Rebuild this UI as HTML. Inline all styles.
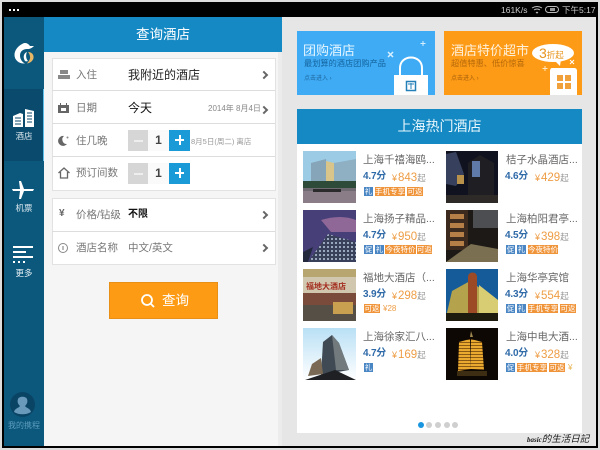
<!DOCTYPE html>
<html><head><meta charset="utf-8">
<style>
*{margin:0;padding:0;box-sizing:border-box}
html,body{width:600px;height:450px;overflow:hidden;background:#000}
body{position:relative;font-family:"Liberation Sans","Noto Sans CJK SC",sans-serif}
.a{position:absolute;white-space:nowrap}
.svg{position:absolute;overflow:visible}
.lbl{color:#777;font-size:10.5px;line-height:16px}
.sep{position:absolute;left:52px;width:223px;height:1px;background:#ddd}
.chev{position:absolute;width:6px;height:6px;border-top:2px solid #666;border-right:2px solid #666;transform:rotate(45deg)}
.t{font-size:10.5px;color:#666;line-height:14px}
.s{font-size:10px;color:#2f6aa8;font-weight:bold;line-height:12px;letter-spacing:-.2px}
.p{font-size:11.5px;color:#ee9d45;line-height:14px}
.p small{font-size:9px;margin-right:1px}
.p i{font-style:normal;font-size:8.5px;color:#999}
.tag{position:absolute;height:9px;line-height:9px;font-size:7.5px;color:#fff;text-align:center;background:#f0943a;white-space:nowrap;overflow:hidden}
.tag.b{background:#4a86c4}
.dot{position:absolute;top:422px;width:6px;height:6px;border-radius:50%;background:#cfcfcf}
</style></head><body>
<div class="a" style="left:0;top:0;width:600px;height:2px;background:#ddd"></div>
<div class="a" style="left:0;top:0;width:2px;height:450px;background:#ddd"></div>
<div class="a" style="left:598px;top:0;width:2px;height:450px;background:#ddd"></div>
<div class="a" style="left:0;top:448px;width:600px;height:2px;background:#ddd"></div>
<div class="a" style="left:9px;top:9px;width:2px;height:2px;background:#fff;box-shadow:4px 0 #fff,8px 0 #fff"></div>
<div class="a" style="left:501px;top:4px;font-size:8.5px;line-height:12px;color:#ccc">161K/s</div>
<svg class="svg" style="left:531px;top:5px" width="30" height="10" fill="none" stroke="#bbb"><path d="M1 3q5-3 10 0M3 5q3-2 6 0M5 7l1 1 1-1"/><rect x="14.500" y="1.500" width="13" height="6" rx="3"/><rect x="19" y="3" width="5" height="3" fill="#999" stroke="none"/></svg>
<div class="a" style="left:562px;top:4px;font-size:8.500px;line-height:12px;color:#ccc">下午5:17</div>

<div class="a" style="left:4px;top:17px;width:40px;height:429px;background:#0c587d"></div>
<div class="a" style="left:4px;top:89px;width:40px;height:72px;background:#0a4a6c"></div>
<div class="a" style="left:43px;top:89px;width:1px;height:72px;background:#5cc1ea"></div>
<svg class="svg" style="left:14px;top:41px" width="21" height="23"><path d="M20 5L16 5C14 2 11 1.500 9 2.500C4 5 .5 9 .5 14C.5 19 5 23 11 22.500C8 21 6 18 6 14.500C6 10.500 9 8 13 8C15 8 17 8 20 5z" fill="#fff"/><path d="M14 11C18 11 20 14 19.500 17C19 20 16 22 13 22.500C15 20 16.500 18 16 15.500C15.800 13.500 15 12 14 11z" fill="#e8b766"/><path d="M11 20C8.500 16 10 12 13 11C11.500 14 12 18 14 20C13 20.500 12 20.500 11 20z" fill="#fff"/></svg>
<svg class="svg" style="left:12px;top:108px" width="24" height="20" fill="#fff"><path d="M1 8l7-3 3 1v13H1zM13 1l9 2v16h-9z"/><path d="M3 10h6M3 13h6M3 16h6M15 5h5M15 8h5M15 11h5M15 14h5" stroke="#0a4a6c"/></svg>
<div class="a" style="left:4px;top:130px;width:40px;text-align:center;font-size:8.500px;line-height:12px;color:#dbe8ef">酒店</div>
<svg class="svg" style="left:11px;top:180px" width="24" height="20" fill="#fff"><path d="M1 9h22l-1 2H13l-3 8H8l1-8H2zM8 1h2l3 8H9z"/></svg>
<div class="a" style="left:4px;top:202px;width:40px;text-align:center;font-size:8.500px;line-height:12px;color:#dbe8ef">机票</div>
<svg class="svg" style="left:13px;top:246px" width="21" height="18" fill="#fff"><rect width="20" height="2" y="0"/><rect width="13" height="2" y="5"/><rect width="20" height="2" y="10"/><rect width="2" height="2" y="15"/><rect x="5" width="2" height="2" y="15"/><rect x="10" width="2" height="2" y="15"/></svg>
<div class="a" style="left:4px;top:267px;width:40px;text-align:center;font-size:8.500px;line-height:12px;color:#e8f0f4">更多</div>
<svg class="svg" style="left:10px;top:392px" width="25" height="25"><circle cx="12.500" cy="12.500" r="12.500" fill="#0a4465"/><path d="M4 20c1-4 5-4 6-6-2-2-3-4-2-7 1-3 8-3 9 0 1 3 0 5-2 7 1 2 5 2 6 6-5 3-12 3-17 0z" fill="#6a9abb"/></svg>
<div class="a" style="left:4px;top:420px;width:40px;text-align:center;font-size:8px;line-height:12px;color:#5d9cbd">我的携程</div>

<div class="a" style="left:44px;top:17px;width:238px;height:429px;background:#f5f5f5"></div>
<div class="a" style="left:278px;top:52px;width:4px;height:394px;background:#ececec"></div>
<div class="a" style="left:44px;top:17px;width:238px;height:35px;background:#1489c4;color:#fff;font-size:13.500px;line-height:35px;text-align:center">查询酒店</div>
<div class="a" style="left:52px;top:58px;width:224px;height:133px;background:#fff;border:1px solid #e2e2e2"></div>
<div class="a" style="left:52px;top:198px;width:224px;height:67px;background:#fff;border:1px solid #e2e2e2"></div>
<div class="sep" style="top:90px"></div><div class="sep" style="top:123px"></div><div class="sep" style="top:156px"></div><div class="sep" style="top:231px"></div>

<svg class="svg" style="left:58px;top:70px" width="12" height="10" fill="#888"><path d="M2 0h8v4H2zM0 5h12v4H0z"/></svg>
<div class="a lbl" style="left:76px;top:67px">入住</div>
<div class="a" style="left:128px;top:66px;font-size:12px;line-height:18px;color:#222">我附近的酒店</div>
<div class="chev" style="left:261px;top:72px"></div>
<svg class="svg" style="left:58px;top:103px" width="11" height="10" fill="#666"><path d="M0 2h2V0h1v2h5V0h1v2h2v8H0z"/><rect x="3" y="5" width="5" height="3" fill="#fff"/></svg>
<div class="a lbl" style="left:76px;top:100px">日期</div>
<div class="a" style="left:128px;top:99px;font-size:12px;line-height:18px;color:#111">今天</div>
<div class="a" style="left:208px;top:103px;font-size:8px;line-height:12px;color:#888">2014年 8月4日</div>
<div class="chev" style="left:261px;top:107px"></div>
<svg class="svg" style="left:58px;top:135px" width="11" height="11"><path d="M6 1a5 5 0 1 0 3 8a4.500 4.500 0 0 1-3-8z" fill="#666"/><circle cx="9.500" cy="2.500" r="1" fill="#888"/></svg>
<div class="a lbl" style="left:76px;top:133px">住几晚</div>
<svg class="svg" style="left:58px;top:167px" width="12" height="12" fill="none" stroke="#666" stroke-width="1.300"><path d="M0.500 6L6 1l5.500 5M2.500 5v6h7V5"/></svg>
<div class="a lbl" style="left:76px;top:165px">预订间数</div>

<div class="a" style="left:128px;top:130px;width:62px;height:21px;background:#fafafa"></div>
<div class="a" style="left:128px;top:130px;width:20px;height:21px;background:#d6d6d6"></div>
<div class="a" style="left:134px;top:140px;width:9px;height:2px;background:#eee"></div>
<div class="a" style="left:148px;top:130px;width:21px;height:21px;text-align:center;font-size:12px;font-weight:bold;line-height:21px;color:#444">1</div>
<div class="a" style="left:169px;top:130px;width:21px;height:21px;background:#1a9bd7"></div>
<div class="a" style="left:175px;top:139px;width:9px;height:2px;background:#fff"></div>
<div class="a" style="left:179px;top:135px;width:2px;height:10px;background:#fff"></div>
<div class="a" style="left:191px;top:136px;font-size:7.500px;line-height:12px;color:#999">8月5日(周二) 离店</div>

<div class="a" style="left:128px;top:163px;width:62px;height:21px;background:#fafafa"></div>
<div class="a" style="left:128px;top:163px;width:20px;height:21px;background:#d6d6d6"></div>
<div class="a" style="left:134px;top:173px;width:9px;height:2px;background:#eee"></div>
<div class="a" style="left:148px;top:163px;width:21px;height:21px;text-align:center;font-size:12px;font-weight:bold;line-height:21px;color:#444">1</div>
<div class="a" style="left:169px;top:163px;width:21px;height:21px;background:#1a9bd7"></div>
<div class="a" style="left:175px;top:172px;width:9px;height:2px;background:#fff"></div>
<div class="a" style="left:179px;top:168px;width:2px;height:10px;background:#fff"></div>

<div class="a" style="left:59px;top:207px;font-size:10px;line-height:14px;color:#666;font-weight:bold">¥</div>
<div class="a lbl" style="left:76px;top:207px">价格/钻级</div>
<div class="a" style="left:128px;top:207px;font-size:10px;line-height:16px;color:#111;font-weight:bold">不限</div>
<div class="chev" style="left:261px;top:212px"></div>
<svg class="svg" style="left:58px;top:243px" width="10" height="10" fill="none" stroke="#888"><circle cx="5" cy="5" r="4.500"/><path d="M5 3v4" stroke="#777"/></svg>
<div class="a lbl" style="left:76px;top:240px">酒店名称</div>
<div class="a lbl" style="left:128px;top:240px">中文/英文</div>
<div class="chev" style="left:261px;top:245px"></div>

<div class="a" style="left:109px;top:282px;width:109px;height:37px;background:#fd9c14;border:1px solid #e88f18"></div>
<svg class="svg" style="left:140px;top:293px" width="16" height="16" fill="none" stroke="#fff" stroke-width="1.800"><circle cx="7" cy="7" r="5"/><path d="M11 11l3 3"/></svg>
<div class="a" style="left:162px;top:291px;font-size:13.500px;line-height:20px;color:#fff">查询</div>

<div class="a" style="left:282px;top:17px;width:314px;height:429px;background:#e6e6e6"></div>

<div class="a" style="left:297px;top:31px;width:138px;height:64px;background:#3fabf5"></div>
<div class="a" style="left:303px;top:42px;font-size:13px;line-height:18px;color:#e6f6ff">团购酒店</div>
<div class="a" style="left:304px;top:58px;font-size:8.200px;line-height:12px;color:#14659e">最划算的酒店团购产品</div>
<div class="a" style="left:304px;top:74px;font-size:6px;line-height:10px;color:#20699e">点击进入 ›</div>
<svg class="svg" style="left:384px;top:40px" width="52" height="55"><path d="M16 36V28c0-14 22-14 22 0v8" fill="none" stroke="#fff" stroke-width="2"/><path d="M10 35h34v20H10z" fill="#fff"/><rect x="22.500" y="41.500" width="9" height="9" fill="#fff" stroke="#2680b8" stroke-width="1.500"/><path d="M24 44h6M27 43v6" stroke="#2680b8"/><path d="M39 1v5M36.500 3.500h5" stroke="#d7f0ff" stroke-width="1"/><path d="M4 12l5 5M9 12l-5 5" stroke="#d7f0ff" stroke-width="1.500"/></svg>

<div class="a" style="left:444px;top:31px;width:138px;height:64px;background:#fd9a16"></div>
<div class="a" style="left:451px;top:42px;font-size:13px;line-height:18px;color:#fff2dd">酒店特价超市</div>
<div class="a" style="left:451px;top:58px;font-size:8.200px;line-height:12px;color:#b5690a">超值特惠、低价惊喜</div>
<div class="a" style="left:451px;top:74px;font-size:6px;line-height:10px;color:#a8620d">点击进入 ›</div>
<svg class="svg" style="left:530px;top:42px" width="52" height="53"><ellipse cx="23" cy="11" rx="21" ry="9" fill="#fff"/><path d="M24 18l6 6 1-7z" fill="#fff"/><path d="M22 26h22c2 0 3 1 3 3v24H20V29c0-2 1-3 2-3z" fill="#fff"/><path d="M27 33h6v6h-6zM35 33h6v6h-6zM27 41h6v6h-6zM35 41h6v6h-6z" fill="#f0a13c"/><path d="M40 18l4 4M44 18l-4 4" stroke="#fff" stroke-width="1"/><path d="M15 24v5M12.500 26.500h5" stroke="#ffe9c4"/></svg>
<div class="a" style="left:539px;top:44px;font-size:14px;line-height:18px;color:#e8951f">3<span style="font-size:8.500px">折起</span></div>

<div class="a" style="left:297px;top:109px;width:285px;height:35px;background:#1489c4;color:#e9f6fc;font-size:14px;line-height:35px;text-align:center">上海热门酒店</div>
<div class="a" style="left:297px;top:144px;width:285px;height:289px;background:#fff"></div>

<svg class="svg" style="left:303px;top:151px" width="53" height="52"><rect width="53" height="30" fill="#9ccbe6"/><rect y="30" width="53" height="22" fill="#6f6a72"/><path d="M8 12l15-4 4 24H8z" fill="#86a5b8"/><path d="M23 10l8 2v20h-8z" fill="#d9c58a"/><path d="M31 12l22-4v24H31z" fill="#8fb0c2"/><rect y="30" width="53" height="7" fill="#2e4a38"/><rect y="40" width="53" height="12" fill="#8a7d88"/><rect x="10" y="38" width="28" height="3" fill="#2b2b2b"/></svg>
<svg class="svg" style="left:303px;top:210px" width="53" height="52"><defs><pattern id="l1" width="4" height="4" patternUnits="userSpaceOnUse"><rect width="4" height="4" fill="#39415a"/><rect width="2" height="2" fill="#99a7bd"/></pattern></defs><rect width="53" height="52" fill="#473f78"/><path d="M18 10q20-6 35 0v12H28z" fill="#8f6897"/><path d="M5 52l20-28 28 8v20z" fill="url(#l1)"/><path d="M0 42l10-5-5 15H0z" fill="#23283c"/></svg>
<svg class="svg" style="left:303px;top:269px" width="53" height="52"><rect width="53" height="52" fill="#8e8473"/><rect y="0" width="53" height="8" fill="#b7a66f"/><rect y="8" width="53" height="16" fill="#d1c6ae"/><text x="3" y="20" font-size="8" fill="#a32d1f" font-family="'Liberation Sans','Noto Sans CJK SC',sans-serif" font-weight="bold">福地大酒店</text><rect y="24" width="53" height="12" fill="#7a4a3a"/><rect y="36" width="53" height="16" fill="#564f45"/><rect x="30" y="33" width="20" height="12" fill="#c8a050"/></svg>
<svg class="svg" style="left:303px;top:328px" width="53" height="52"><defs><linearGradient id="g1" x1="0" y1="0" x2="0" y2="1"><stop offset="0" stop-color="#b9e0f5"/><stop offset="1" stop-color="#fff"/></linearGradient></defs><rect width="53" height="52" fill="url(#g1)"/><path d="M20 14l9-7 7 8 10 27-28 5z" fill="#3f4a54"/><path d="M29 7l7 8 10 27H33z" fill="#737a7e"/><path d="M5 48l4-12 9-6 2 16z" fill="#7a6a55"/><path d="M2 52l30-10 21 10z" fill="#1e2023"/></svg>

<svg class="svg" style="left:446px;top:151px" width="52" height="52"><rect width="52" height="52" fill="#10131f"/><path d="M0 3l10-2 8 22-8 12-10-2z" fill="#37405c"/><path d="M22 12l12-8 14 8v40H22z" fill="#1f1e22"/><rect x="26" y="10" width="8" height="16" fill="#5f7aa8"/><rect x="11" y="24" width="7" height="9" fill="#b8924a"/><rect y="44" width="52" height="8" fill="#2e2a28"/></svg>
<svg class="svg" style="left:446px;top:210px" width="52" height="52"><rect width="52" height="52" fill="#1c1917"/><rect x="27" y="0" width="25" height="18" fill="#4c4e52"/><path d="M0 0h22v40H0z" fill="#3d2a1e"/><path d="M4 4h14v5H4zM4 13h14v5H4zM4 22h14v5H4zM4 31h14v5H4z" fill="#b67f48"/><path d="M0 52l25-18 27 5v13z" fill="#7a6f50"/></svg>
<svg class="svg" style="left:446px;top:269px" width="52" height="52"><rect width="52" height="52" fill="#155b99"/><path d="M0 48L6 22l18-10 28 20v16z" fill="#b4a34c"/><path d="M22 8c0-6 9-6 9 0v44h-9z" fill="#9c4a26"/><path d="M33 16l19 15v14H33z" fill="#d8cd73"/><rect y="44" width="52" height="8" fill="#1c1b0d"/></svg>
<svg class="svg" style="left:446px;top:328px" width="52" height="52"><defs><pattern id="l2" width="3" height="3" patternUnits="userSpaceOnUse"><rect width="3" height="3" fill="#8a5a14"/><rect width="3" height="2" fill="#eaa92f"/></pattern></defs><rect width="52" height="52" fill="#0e0804"/><path d="M13 14l11-3 1 30-13 2z" fill="url(#l2)"/><path d="M25 11l11 3 2 28-13-1z" fill="url(#l2)"/><path d="M25 3l2 6h-3z" fill="#a08a50"/><rect x="11" y="43" width="30" height="5" fill="#3d2d12"/></svg>

<div class="a t" style="left:363px;top:153px">上海千禧海鸥...</div>
<div class="a s" style="left:363px;top:171px">4.7分</div>
<div class="a p" style="left:392px;top:171px"><small>¥</small>843<i>起</i></div>
<div class="tag b" style="left:364px;top:187px;width:9px">礼</div><div class="tag" style="left:375px;top:187px;width:30px">手机专享</div><div class="tag" style="left:407px;top:187px;width:16px">可返</div>

<div class="a t" style="left:506px;top:153px">桔子水晶酒店...</div>
<div class="a s" style="left:505px;top:171px">4.6分</div>
<div class="a p" style="left:535px;top:171px"><small>¥</small>429<i>起</i></div>

<div class="a t" style="left:363px;top:212px">上海扬子精品...</div>
<div class="a s" style="left:363px;top:230px">4.7分</div>
<div class="a p" style="left:392px;top:230px"><small>¥</small>950<i>起</i></div>
<div class="tag b" style="left:364px;top:245px;width:9px">促</div><div class="tag b" style="left:375px;top:245px;width:9px">礼</div><div class="tag" style="left:385px;top:245px;width:31px">今夜特价</div><div class="tag" style="left:417px;top:245px;width:15px">可返</div>

<div class="a t" style="left:506px;top:212px">上海柏阳君亭...</div>
<div class="a s" style="left:505px;top:230px">4.5分</div>
<div class="a p" style="left:535px;top:230px"><small>¥</small>398<i>起</i></div>
<div class="tag b" style="left:506px;top:245px;width:9px">促</div><div class="tag b" style="left:517px;top:245px;width:9px">礼</div><div class="tag" style="left:528px;top:245px;width:30px">今夜特价</div>

<div class="a t" style="left:363px;top:271px">福地大酒店（...</div>
<div class="a s" style="left:363px;top:289px">3.9分</div>
<div class="a p" style="left:392px;top:289px"><small>¥</small>298<i>起</i></div>
<div class="tag" style="left:364px;top:304px;width:16px">可返</div>
<div class="a" style="left:383px;top:303px;font-size:8px;line-height:11px;color:#ee9d45">¥28</div>

<div class="a t" style="left:506px;top:271px">上海华亭宾馆</div>
<div class="a s" style="left:505px;top:289px">4.3分</div>
<div class="a p" style="left:535px;top:289px"><small>¥</small>554<i>起</i></div>
<div class="tag b" style="left:506px;top:304px;width:9px">促</div><div class="tag b" style="left:517px;top:304px;width:9px">礼</div><div class="tag" style="left:528px;top:304px;width:30px">手机专享</div><div class="tag" style="left:560px;top:304px;width:16px">可返</div>

<div class="a t" style="left:363px;top:330px">上海徐家汇八...</div>
<div class="a s" style="left:363px;top:348px">4.7分</div>
<div class="a p" style="left:392px;top:348px"><small>¥</small>169<i>起</i></div>
<div class="tag b" style="left:364px;top:363px;width:9px">礼</div>

<div class="a t" style="left:506px;top:330px">上海中电大酒...</div>
<div class="a s" style="left:505px;top:348px">4.0分</div>
<div class="a p" style="left:535px;top:348px"><small>¥</small>328<i>起</i></div>
<div class="tag b" style="left:506px;top:363px;width:9px">促</div><div class="tag" style="left:517px;top:363px;width:30px">手机专享</div><div class="tag" style="left:549px;top:363px;width:16px">可返</div>
<div class="a" style="left:568px;top:362px;font-size:8px;line-height:11px;color:#e8b04a">¥</div>

<div class="dot" style="left:418px;background:#1a96e0"></div><div class="dot" style="left:426px"></div><div class="dot" style="left:435px"></div><div class="dot" style="left:444px"></div><div class="dot" style="left:452px"></div>

<div class="a" style="left:527px;top:434px;font-size:9.500px;line-height:12px;font-style:italic;color:#111;font-family:'Liberation Serif','Noto Sans CJK SC',sans-serif;text-shadow:0 0 1px #fff"><span style="font-size:7px;font-weight:bold">basic</span>的生活日記</div>
</body></html>
